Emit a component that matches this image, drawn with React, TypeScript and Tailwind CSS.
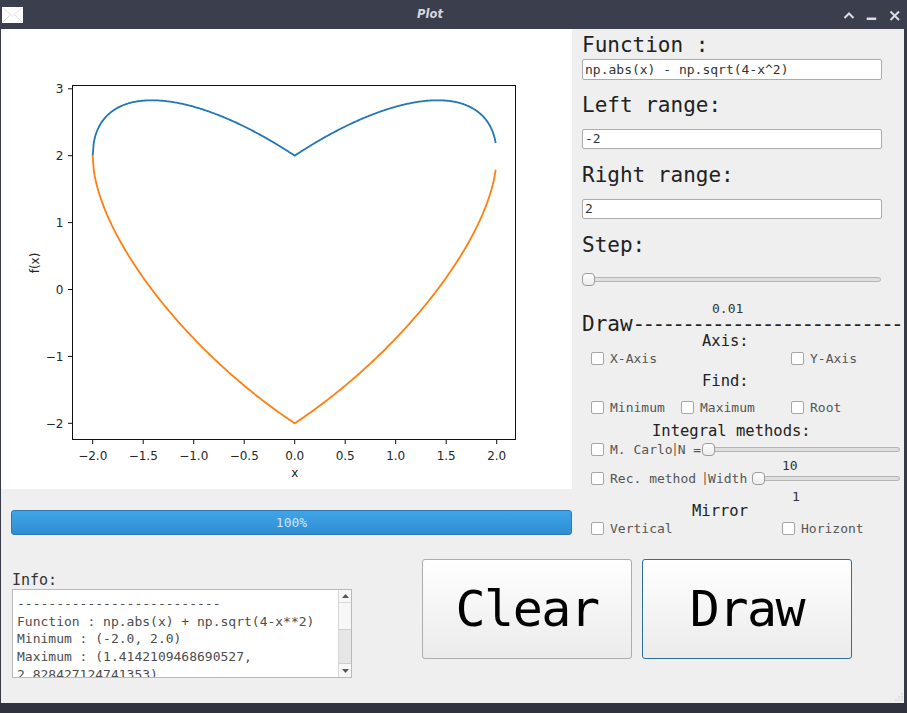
import React from 'react';

const mono = "font-['DejaVu_Sans_Mono',monospace]";

function Check({ label, className = '' }: { label: string; className?: string }) {
  return (
    <div className={`flex items-center h-[13px] ${className}`}>
      <span className="w-[13px] h-[13px] shrink-0 rounded-[2px] border border-[#a6a6a6] bg-white" />
      <span className="ml-[6px] text-[13px] leading-[13px] text-[#555] whitespace-nowrap">{label}</span>
    </div>
  );
}

function Slider({ className = '' }: { className?: string }) {
  return (
    <div className={`relative h-[13px] ${className}`}>
      <div className="absolute left-0 right-0 top-[4px] h-[5px] rounded-full border border-[#b5b5b5] bg-[#dedede]" />
      <div className="absolute left-0 top-0 w-[13px] h-[13px] rounded-[4px] border border-[#9d9d9d] bg-gradient-to-b from-white to-[#ececec]" />
    </div>
  );
}

function Field({ value, className = '' }: { value: string; className?: string }) {
  return (
    <div className={`w-[300px] rounded-[2px] border border-[#ababab] bg-white pl-[2px] flex items-center text-[13px] text-[#333] ${className}`}>
      {value}
    </div>
  );
}

function Plot() {
  const X = (x: number) => 293.7 + 101 * x;
  const Y = (y: number) => 260.5 - 66.9 * y;
  const xs = Array.from({ length: 400 }, (_, i) => -2 + i * 0.01);
  const path = (f: (x: number) => number) =>
    xs.map((x, i) => `${i ? 'L' : 'M'}${X(x).toFixed(2)},${Y(f(x)).toFixed(2)}`).join('');
  const upper = path((x) => Math.abs(x) + Math.sqrt(Math.max(0, 4 - x * x)));
  const lower = path((x) => Math.abs(x) - Math.sqrt(Math.max(0, 4 - x * x)));
  const xt = [-2, -1.5, -1, -0.5, 0, 0.5, 1, 1.5, 2];
  const yt = [-2, -1, 0, 1, 2, 3];
  const fmt = (s: string) => s.replace('-', '\u2212');

  return (
    <svg width="571" height="460" className="block bg-white shrink-0" fontFamily="'DejaVu Sans', sans-serif" fontSize="12" fill="#262626">
      <path d={upper} fill="none" stroke="#1f77b4" strokeWidth="1.8" strokeLinejoin="round" />
      <path d={lower} fill="none" stroke="#ff7f0e" strokeWidth="1.8" strokeLinejoin="round" />
      <rect x="71.5" y="56.5" width="443" height="354" fill="none" stroke="#111" strokeWidth="1" />
      {xt.map((v) => (
        <g key={v}>
          <line x1={X(v)} x2={X(v)} y1="411" y2="415" stroke="#111" strokeWidth="1" />
          <text x={X(v)} y="430.5" textAnchor="middle">{fmt(v.toFixed(1))}</text>
        </g>
      ))}
      {yt.map((v) => (
        <g key={v}>
          <line x1="67" x2="71.5" y1={Y(v)} y2={Y(v)} stroke="#111" strokeWidth="1" />
          <text x="62.5" y={Y(v) + 4.4} textAnchor="end">{fmt(String(v))}</text>
        </g>
      ))}
      <text x="293.7" y="447.5" textAnchor="middle">x</text>
      <text transform="translate(38,234) rotate(-90)" textAnchor="middle">f(x)</text>
    </svg>
  );
}

export default function App() {
  return (
    <div className={`w-[907px] h-[713px] bg-[#363a47] flex flex-col overflow-hidden ${mono}`}>
      {/* title bar */}
      <div className="h-[29px] shrink-0 bg-[#3b3e4c] flex items-center">
        <svg width="21" height="16" className="ml-[2px] mt-[1px] shrink-0">
          <rect x="0" y="0" width="21" height="16" fill="#fff" />
          <path d="M1 1 L10.5 9 L20 1 M1 15 L8 8 M20 15 L13 8" stroke="#e2e2e2" strokeWidth="1" fill="none" />
        </svg>
        <div className="flex-1 text-center text-[11.5px] font-bold italic text-[#d6d7dc] font-['DejaVu_Sans',sans-serif]">Plot</div>
        <svg width="70" height="29" className="shrink-0">
          <path d="M7.5 18 L12 13.5 L16.5 18" stroke="#dcdde2" strokeWidth="2" fill="none" />
          <rect x="29.7" y="17.5" width="9.5" height="2.5" fill="#dcdde2" />
          <path d="M53.5 11.5 L62 20 M62 11.5 L53.5 20" stroke="#dcdde2" strokeWidth="2" fill="none" />
        </svg>
      </div>

      {/* window body */}
      <div className="h-[674px] shrink-0 ml-[1px] mr-[3px] bg-[#efefef] flex flex-col">
        <div className="flex h-[506px] shrink-0">
          {/* left column */}
          <div className="w-[571px] shrink-0 flex flex-col">
            <Plot />
            <div className="mt-[21px] ml-[10px] w-[561px] h-[25px] rounded-[3px] border border-[#2c79b2] bg-gradient-to-b from-[#3fa5e8] to-[#2f8ed2] flex items-center justify-center text-[13px] text-[#cfe5f6]">
              100%
            </div>
          </div>

          {/* right panel */}
          <div className="w-[332px] shrink-0 overflow-hidden flex flex-col pl-[10px] text-[#222]">
            <div className="h-[6px] shrink-0" />
            <div className="h-[24px] shrink-0 text-[21px] leading-[21px] whitespace-nowrap">Function :</div>
            <Field value="np.abs(x) - np.sqrt(4-x^2)" className="h-[21px] shrink-0" />
            <div className="h-[15px] shrink-0" />
            <div className="h-[34px] shrink-0 text-[21px] leading-[21px] whitespace-nowrap">Left range:</div>
            <Field value="-2" className="h-[20px] shrink-0" />
            <div className="h-[16px] shrink-0" />
            <div className="h-[34px] shrink-0 text-[21px] leading-[21px] whitespace-nowrap">Right range:</div>
            <Field value="2" className="h-[20px] shrink-0" />
            <div className="h-[16px] shrink-0" />
            <div className="h-[38px] shrink-0 text-[21px] leading-[21px]">Step:</div>
            <Slider className="w-[299px] shrink-0" />
            <div className="h-[16px] shrink-0" />
            <div className="h-[14px] shrink-0 pl-[130px] text-[13px] leading-[13px] text-[#333]">0.01</div>
            <div className="h-[17px] shrink-0 text-[21px] leading-[17px] whitespace-nowrap">
              Draw<span className="tracking-[-2.7px]">---------------------------</span>
            </div>
            <div className="h-[19px] shrink-0 pl-[120px] text-[15.5px] leading-[16px]">Axis:</div>
            <div className="h-[21px] shrink-0 flex items-start pl-[9px]">
              <Check label="X-Axis" className="w-[200px]" />
              <Check label="Y-Axis" />
            </div>
            <div className="h-[28px] shrink-0 pl-[120px] text-[15.5px] leading-[16px]">Find:</div>
            <div className="h-[22px] shrink-0 flex items-start pl-[9px]">
              <Check label="Minimum" className="w-[90px]" />
              <Check label="Maximum" className="w-[110px]" />
              <Check label="Root" />
            </div>
            <div className="h-[20px] shrink-0 pl-[70px] text-[15.5px] leading-[16px] whitespace-nowrap">Integral methods:</div>
            <div className="h-[16px] shrink-0 flex items-start pl-[9px]">
              <Check label="M. Carlo" />
              <span className="ml-[1px] w-[2px] h-[13px] bg-[#cf9560] shrink-0" />
              <span className="ml-[2px] text-[13px] leading-[13px] text-[#555] whitespace-nowrap">N =</span>
              <Slider className="ml-[1px] flex-1 mr-[4px]" />
            </div>
            <div className="h-[13px] shrink-0 pl-[200px] text-[13px] leading-[13px] text-[#333]">10</div>
            <div className="h-[18px] shrink-0 flex items-start pl-[9px]">
              <Check label="Rec. method" />
              <span className="ml-[8px] w-[2px] h-[13px] bg-[#cf9560] shrink-0" />
              <span className="ml-[2px] text-[13px] leading-[13px] text-[#555]">Width</span>
              <Slider className="ml-[5px] flex-1 mr-[4px]" />
            </div>
            <div className="h-[13px] shrink-0 pl-[210px] text-[13px] leading-[13px] text-[#333]">1</div>
            <div className="h-[19px] shrink-0 pl-[110px] text-[15.5px] leading-[16px]">Mirror</div>
            <div className="h-[13px] shrink-0 flex items-start pl-[9px]">
              <Check label="Vertical" className="w-[191px]" />
              <Check label="Horizont" />
            </div>
          </div>
        </div>

        {/* bottom section */}
        <div className="flex-1 flex">
          <div className="ml-[11px] pt-[37px] w-[340px] shrink-0 flex flex-col">
            <div className="h-[17px] text-[15px] leading-[16px] text-[#333]">Info:</div>
            <div className="h-[89px] border border-[#b9b9b9] bg-white flex overflow-hidden">
              <div className="flex-1 pl-[4px] pt-[5px] text-[13px] leading-[17.7px] text-[#4d4d4d] whitespace-pre overflow-hidden">
                <div>--------------------------</div>
                <div>Function : np.abs(x) + np.sqrt(4-x**2)</div>
                <div>Minimum : (-2.0, 2.0)</div>
                <div>Maximum : (1.4142109468690527,</div>
                <div>2.828427124741353)</div>
              </div>
              <div className="w-[13px] shrink-0 border-l border-[#d6d6d6] flex flex-col bg-[#f7f7f7]">
                <div className="h-[13px] flex items-center justify-center border-b border-[#dadada]">
                  <svg width="7" height="4"><path d="M0 4 L3.5 0 L7 4 Z" fill="#555" /></svg>
                </div>
                <div className="h-[26px]" />
                <div className="h-[35px] bg-[#e6e6e6] border-y border-[#cfcfcf]" />
                <div className="flex-1 flex items-center justify-center">
                  <svg width="7" height="4"><path d="M0 0 L3.5 4 L7 0 Z" fill="#555" /></svg>
                </div>
              </div>
            </div>
          </div>
          <div className="ml-[70px] mt-[24px] flex gap-[10px] h-[100px]">
            <div className="w-[210px] h-[100px] rounded-[3px] border border-[#adadad] bg-gradient-to-b from-white to-[#ebebeb] flex items-center justify-center text-[50px] tracking-[-1.5px] text-black">
              Clear
            </div>
            <div className="w-[210px] h-[100px] rounded-[3px] border border-[#2f6f9f] bg-gradient-to-b from-white to-[#ebebeb] flex items-center justify-center text-[50px] tracking-[-1.5px] text-black">
              Draw
            </div>
          </div>
          <div className="flex-1" />
          <svg width="8" height="8" className="self-end mb-[2px] mr-[1px]">
            {[[7, 1], [7, 4], [4, 4], [7, 7], [4, 7], [1, 7]].map(([x, y]) => (
              <rect key={`${x}-${y}`} x={x - 0.5} y={y - 0.5} width="1" height="1" fill="#b5b5b5" />
            ))}
          </svg>
        </div>
      </div>
      <div className="flex-1 bg-[#30333e]" />
    </div>
  );
}
